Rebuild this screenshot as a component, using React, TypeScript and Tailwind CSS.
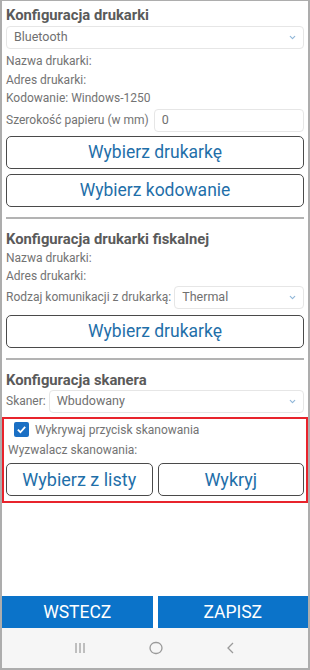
import { ChevronDown } from "lucide-react";

const font = { fontFamily: "Roboto, 'Noto Sans', sans-serif" };

function Select({ value, className = "" }: { value: string; className?: string }) {
  return (
    <div
      className={`flex items-center justify-between h-[23px] rounded-[4px] border border-[#e6e6e6] pl-[7px] pr-[6px] text-[12.5px] text-[#707070] ${className}`}
    >
      <span>{value}</span>
      <ChevronDown size={9} strokeWidth={3} className="text-[#8fb6d8]" />
    </div>
  );
}

function OutlineButton({ label, className = "" }: { label: string; className?: string }) {
  return (
    <button
      className={`h-[33px] rounded-[5px] border-[1.5px] border-[#4a4a4a] bg-white text-[17.5px] text-[#1f6fa9] ${className}`}
    >
      {label}
    </button>
  );
}

function Line({ children }: { children: React.ReactNode }) {
  return <div className="h-[18.5px] leading-[18.5px] text-[12px] text-[#737373]">{children}</div>;
}

function Title({ children }: { children: React.ReactNode }) {
  return <div className="text-[14.8px] font-bold text-[#5a5a5a] leading-[20px]">{children}</div>;
}

export default function App() {
  return (
    <div
      className="w-[310px] h-[670px] bg-white border-x-2 border-b-2 border-t border-[#adadad] flex flex-col overflow-hidden"
      style={font}
    >
      <div className="flex flex-col px-[4px] pt-[4px]">
        {/* Drukarka */}
        <Title>Konfiguracja drukarki</Title>
        <Select value="Bluetooth" className="mt-[1px]" />
        <div className="mt-[3px]">
          <Line>Nazwa drukarki:</Line>
          <Line>Adres drukarki:</Line>
          <Line>Kodowanie: Windows-1250</Line>
        </div>
        <div className="flex items-center gap-[5px] mt-[1px]">
          <span className="text-[12px] text-[#737373] whitespace-nowrap">Szerokość papieru (w mm)</span>
          <div className="flex-1 h-[23px] rounded-[4px] border border-[#e6e6e6] pl-[7px] text-[12.5px] text-[#707070] flex items-center">
            0
          </div>
        </div>
        <OutlineButton label="Wybierz drukarkę" className="mt-[4px]" />
        <OutlineButton label="Wybierz kodowanie" className="mt-[5px]" />
        <div className="h-[2px] bg-[#b3b3b3] mt-[10px]" />

        {/* Fiskalna */}
        <Title>
          <div className="mt-[10px]">Konfiguracja drukarki fiskalnej</div>
        </Title>
        <Line>Nazwa drukarki:</Line>
        <Line>Adres drukarki:</Line>
        <div className="flex items-center gap-[3px]">
          <span className="text-[12px] text-[#737373] whitespace-nowrap">Rodzaj komunikacji z drukarką:</span>
          <Select value="Thermal" className="flex-1" />
        </div>
        <OutlineButton label="Wybierz drukarkę" className="mt-[6px]" />
        <div className="h-[2px] bg-[#b3b3b3] mt-[10px]" />

        {/* Skaner */}
        <Title>
          <div className="mt-[10px]">Konfiguracja skanera</div>
        </Title>
        <div className="flex items-center gap-[3px]">
          <span className="text-[12px] text-[#737373]">Skaner:</span>
          <Select value="Wbudowany" className="flex-1" />
        </div>
      </div>
      <ScannerBox />
      <div className="flex-1" />
      <div className="flex gap-[5px] h-[32px]">
        <button className="flex-1 bg-[#0b73c9] text-white text-[17.5px]">WSTECZ</button>
        <button className="flex-1 bg-[#0b73c9] text-white text-[17.5px]">ZAPISZ</button>
      </div>
      <div className="h-[40px] bg-[#f6f6f6] flex items-center justify-around px-[40px] text-[#9a9a9a]">
        <svg width="14" height="14" viewBox="0 0 14 14" fill="none" stroke="currentColor" strokeWidth="1.2">
          <path d="M3 2v10M7 2v10M11 2v10" />
        </svg>
        <svg width="16" height="16" viewBox="0 0 16 16" fill="none" stroke="currentColor" strokeWidth="1.3">
          <rect x="2" y="2.5" width="12" height="11" rx="5.5" />
        </svg>
        <svg width="12" height="14" viewBox="0 0 12 14" fill="none" stroke="currentColor" strokeWidth="1.3">
          <path d="M8 2L3 7l5 5" />
        </svg>
      </div>
    </div>
  );
}

function ScannerBox() {
  return (
    <div className="mt-[4px] border-2 border-[#e8242c] px-[2px] pt-[2px] pb-[5px]">
      <div className="flex items-center gap-[6px] pl-[8px] h-[18px]">
        <span className="w-[15px] h-[15px] rounded-[2px] bg-[#1a6fc4] flex items-center justify-center">
          <svg width="11" height="11" viewBox="0 0 12 12" fill="none" stroke="white" strokeWidth="2">
            <path d="M2 6.2l2.8 2.8L10 3.2" />
          </svg>
        </span>
        <span className="text-[12px] text-[#737373]">Wykrywaj przycisk skanowania</span>
      </div>
      <div className="h-[18px] leading-[18px] text-[12px] text-[#737373] mt-[2px] pl-[2px]">Wyzwalacz skanowania:</div>
      <div className="flex gap-[5px] mt-[4px]">
        <OutlineButton label="Wybierz z listy" className="flex-1 h-[32px] text-[18px]" />
        <OutlineButton label="Wykryj" className="flex-1 h-[32px] text-[18px]" />
      </div>
    </div>
  );
}
